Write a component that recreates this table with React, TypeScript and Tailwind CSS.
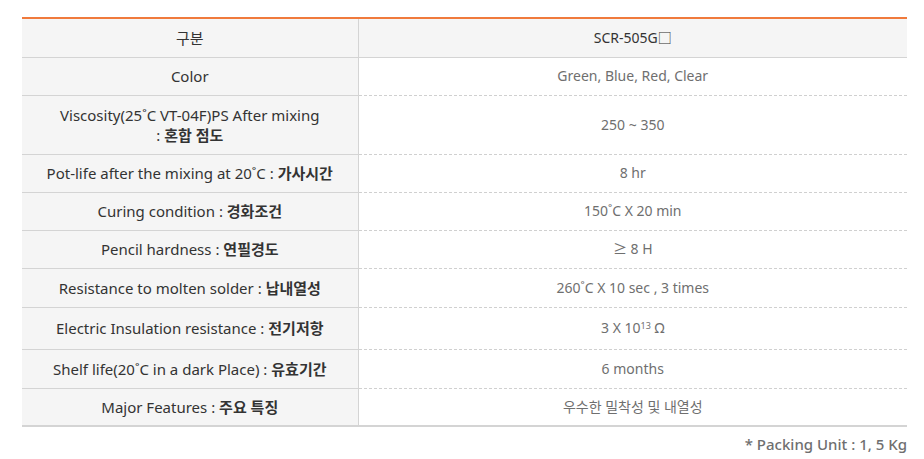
const ROWS: { label: string; ko?: string; value: React.ReactNode; h: string }[] = [
    { label: "Color", value: "Green, Blue, Red, Clear", h: "h-[38px]" },
    {
        label: "Viscosity(25˚C VT-04F)PS After mixing",
        ko: "혼합 점도",
        value: "250 ~ 350",
        h: "h-[59px]",
    },
    { label: "Pot-life after the mixing at 20˚C", ko: "가사시간", value: "8 hr", h: "h-[38px]" },
    { label: "Curing condition", ko: "경화조건", value: "150˚C X 20 min", h: "h-[38px]" },
    { label: "Pencil hardness", ko: "연필경도", value: "≥ 8 H", h: "h-[38px]" },
    {
        label: "Resistance to molten solder",
        ko: "납내열성",
        value: "260˚C X 10 sec , 3 times",
        h: "h-[39px]",
    },
    {
        label: "Electric Insulation resistance",
        ko: "전기저항",
        value: (
            <>
                3 X 10<sup className="text-[9px]">13</sup> Ω
            </>
        ),
        h: "h-[42px]",
    },
    {
        label: "Shelf life(20˚C in a dark Place)",
        ko: "유효기간",
        value: "6 months",
        h: "h-[39px]",
    },
    { label: "Major Features", ko: "주요 특징", value: "우수한 밀착성 및 내열성", h: "h-[38px]" },
];

function App() {
    return (
        <div
            className="bg-white w-[924px] h-[459px] pl-[22px] pt-[17px]"
            style={{ fontFamily: '"Noto Sans", "Noto Sans CJK KR", sans-serif' }}
        >
            <table className="w-[885px] border-collapse border-t-2 border-t-[#f07a3c] border-b-2 border-b-[#d4d4d4] text-[14px] leading-[20px]">
                <tbody>
                    <tr className="h-[39px] bg-[#f5f5f5] border-b border-[#d4d4d4]">
                        <td className="w-[336px] text-center text-[#333] text-[15px] border-r border-[#d4d4d4]">
                            구분
                        </td>
                        <td className="text-center text-[#333]">SCR-505G□</td>
                    </tr>
                    {ROWS.map((row, i) => (
                        <tr key={i} className={row.h}>
                            <td
                                className={`bg-[#f5f5f5] text-center text-[15px] text-[#333] border-r border-[#d4d4d4] ${
                                    i === ROWS.length - 1 ? "" : "border-b"
                                }`}
                            >
                                {row.label}
                                {i === 1 && <br />}
                                {row.ko && (
                                    <>
                                        {i === 1 ? "" : " "}:{" "}
                                        <span className="font-bold">{row.ko}</span>
                                    </>
                                )}
                            </td>
                            <td
                                className={`text-center text-[#6f6f6f] ${
                                    i === ROWS.length - 1 ? "" : "border-b border-dashed border-[#d0d0d0]"
                                }`}
                            >
                                {row.value}
                            </td>
                        </tr>
                    ))}
                </tbody>
            </table>
            <p className="w-[885px] text-right text-[15px] text-[#6f6f6f] mt-[6px] font-medium">
                * Packing Unit : 1, 5 Kg
            </p>
        </div>
    );
}

export default App;
